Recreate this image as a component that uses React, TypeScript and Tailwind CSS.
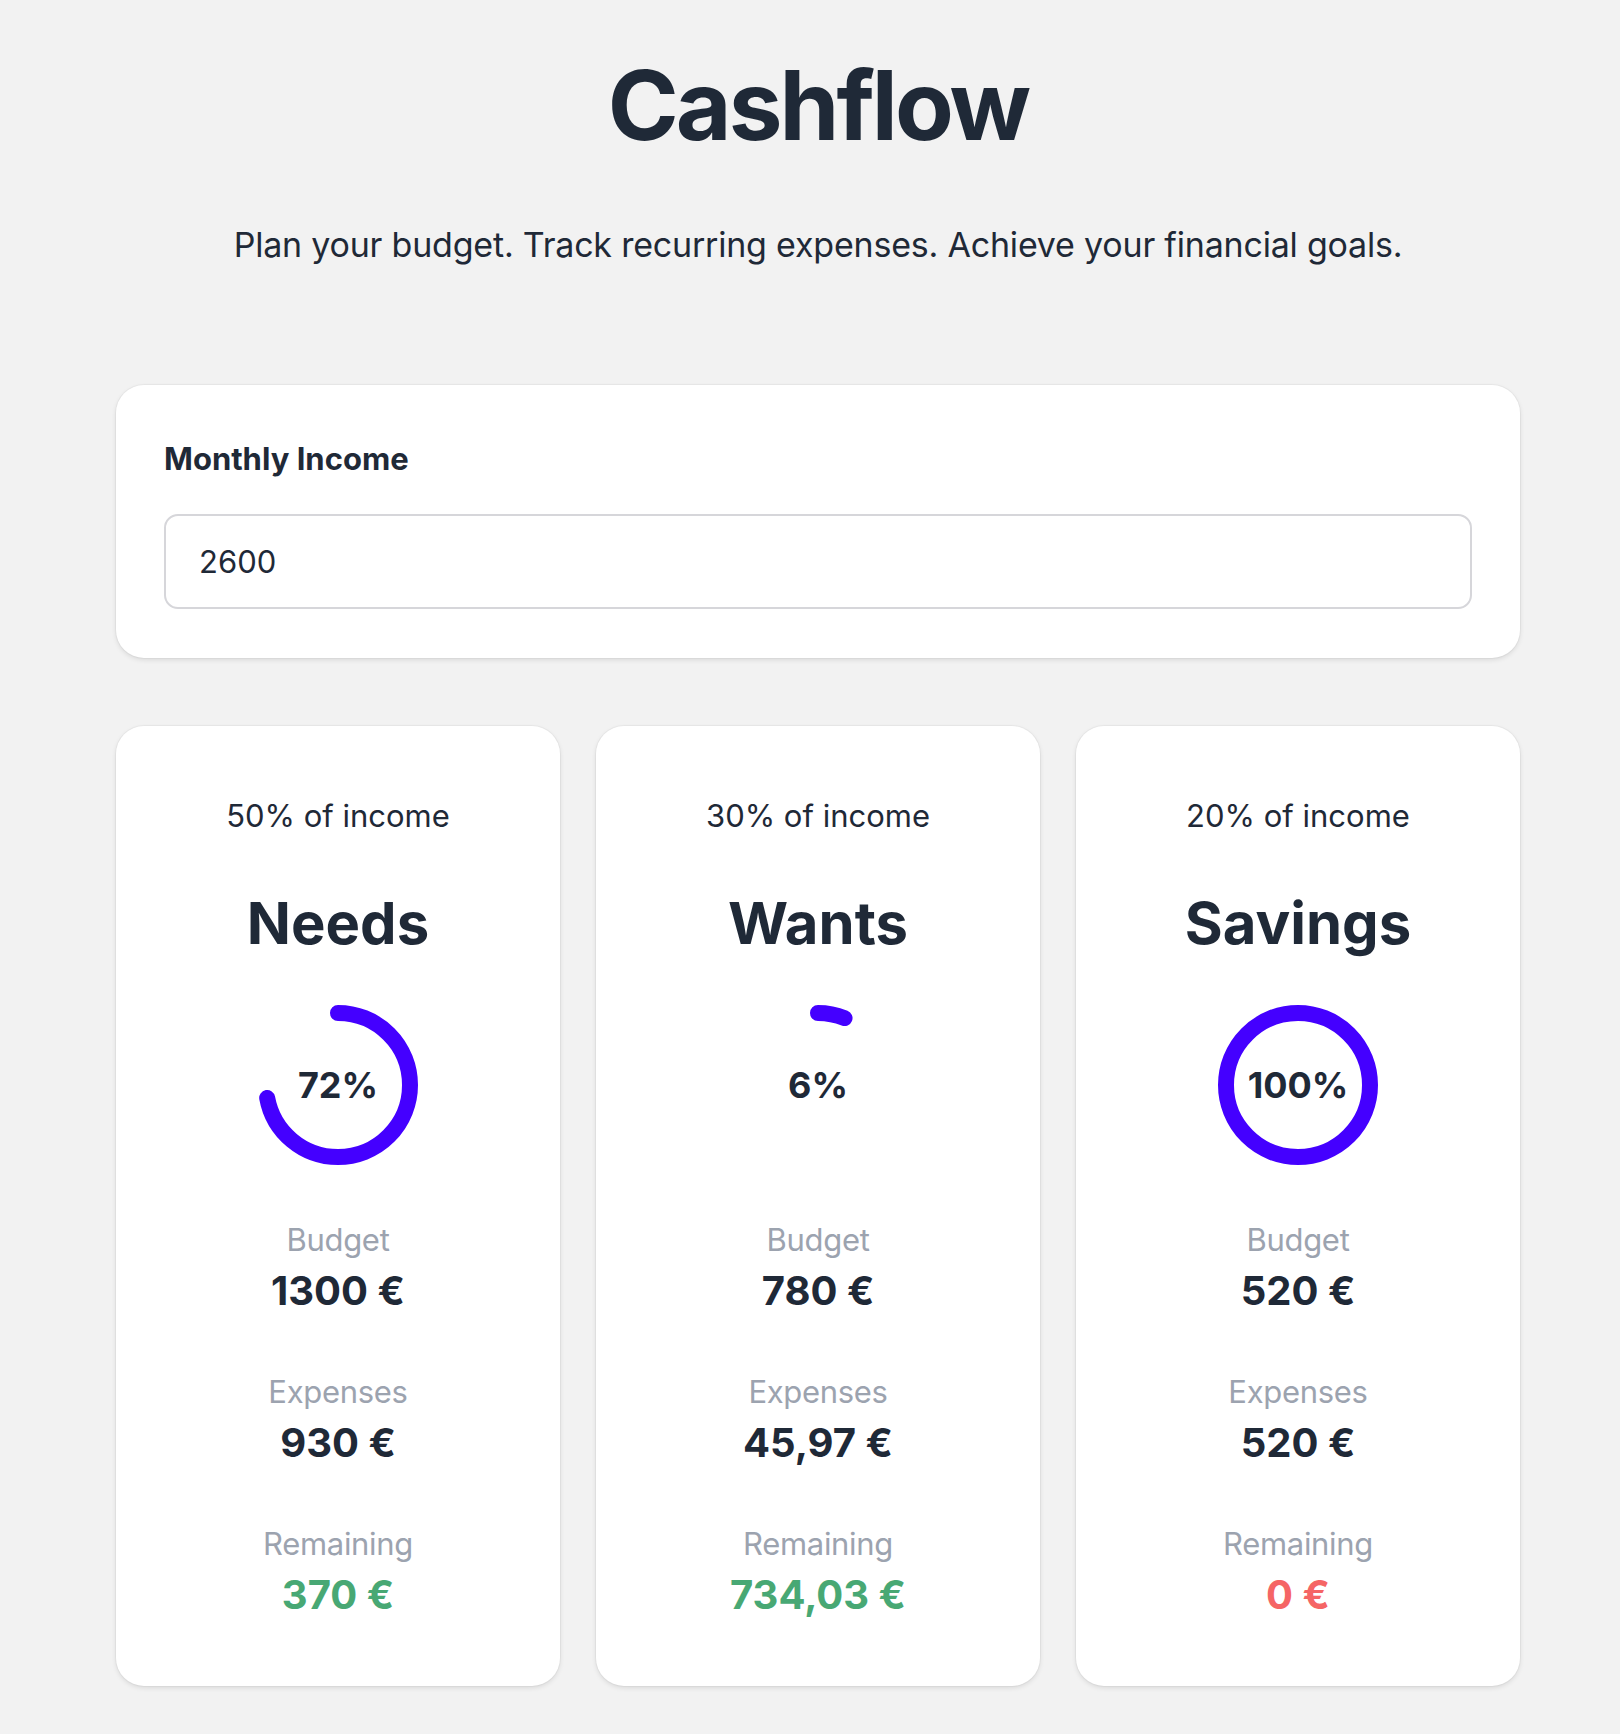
import React from 'react';

type Bucket = {
  share: number;
  name: string;
  used: number;
  budget: string;
  expenses: string;
  remaining: string;
  over: boolean;
};

const buckets: Bucket[] = [
  { share: 50, name: 'Needs', used: 72, budget: '1300 €', expenses: '930 €', remaining: '370 €', over: false },
  { share: 30, name: 'Wants', used: 6, budget: '780 €', expenses: '45,97 €', remaining: '734,03 €', over: false },
  { share: 20, name: 'Savings', used: 100, budget: '520 €', expenses: '520 €', remaining: '0 €', over: true },
];

const RADIUS = 72;
const CIRCUMFERENCE = 2 * Math.PI * RADIUS;

function Ring({ value }: { value: number }) {
  const dash = (Math.min(value, 100) / 100) * CIRCUMFERENCE;
  return (
    <div className="relative mt-[50px] h-[160px] w-[160px]">
      <svg viewBox="0 0 160 160" className="h-full w-full -rotate-90" aria-hidden>
        <circle
          cx="80"
          cy="80"
          r={RADIUS}
          fill="none"
          stroke="#4400ff"
          strokeWidth={16}
          strokeLinecap="round"
          strokeDasharray={`${dash} ${CIRCUMFERENCE}`}
        />
      </svg>
      <span className="absolute inset-0 flex items-center justify-center text-[36px] font-bold leading-none text-[#1f2937]">
        {value}%
      </span>
    </div>
  );
}

function Stat({ label, value, tone = 'text-[#1f2937]' }: { label: string; value: string; tone?: string }) {
  return (
    <div className="flex flex-col items-center">
      <span className="text-[31px] leading-[46px] tracking-[-0.01em] text-[#9ca3af]">{label}</span>
      <span className={`text-[40px] font-bold leading-[56px] ${tone}`}>{value}</span>
    </div>
  );
}

function BucketCard({ bucket }: { bucket: Bucket }) {
  return (
    <div className="flex flex-col items-center rounded-[28px] bg-white pt-[70px] pb-[63px] shadow-[0_2px_5px_rgba(0,0,0,0.1),0_0_0_1px_rgba(0,0,0,0.03)]">
      <p className="text-[31px] leading-[40px] text-[#1f2937]">{bucket.share}% of income</p>
      <h2 className="mt-[55px] text-[58px] font-bold leading-[64px] text-[#1f2937]">{bucket.name}</h2>
      <Ring value={bucket.used} />
      <div className="mt-[52px] flex flex-col gap-[50px]">
        <Stat label="Budget" value={bucket.budget} />
        <Stat label="Expenses" value={bucket.expenses} />
        <Stat
          label="Remaining"
          value={bucket.remaining}
          tone={bucket.over ? 'text-[#f56565]' : 'text-[#48a874]'}
        />
      </div>
    </div>
  );
}

export default function App() {
  return (
    <div className="min-h-screen bg-[#f2f2f2] pl-4 font-['Inter',sans-serif] text-[#1f2937]">
      <main className="mx-auto max-w-[1404px] pt-[57px] pb-[48px]">
        <header className="text-center">
          <h1 className="text-[96px] font-bold leading-[96px] tracking-[-0.03em]">Cashflow</h1>
          <p className="mt-[68px] text-[34px] leading-[48px] tracking-[-0.006em]">
            Plan your budget. Track recurring expenses. Achieve your financial goals.
          </p>
        </header>

        <section className="mt-[116px] rounded-[28px] bg-white px-[48px] pt-[48px] pb-[49px] shadow-[0_2px_5px_rgba(0,0,0,0.1),0_0_0_1px_rgba(0,0,0,0.03)]">
          <label htmlFor="income" className="block text-[31px] font-bold leading-[52px]">
            Monthly Income
          </label>
          <input
            id="income"
            type="text"
            defaultValue="2600"
            className="mt-[29px] block h-[95px] w-full rounded-[14px] border-2 border-[#d6d6da] bg-white px-[33px] text-[31px] text-[#1f2937] outline-none"
          />
        </section>

        <section className="mt-[68px] grid grid-cols-3 gap-9">
          {buckets.map((b) => (
            <BucketCard key={b.name} bucket={b} />
          ))}
        </section>
      </main>
    </div>
  );
}
